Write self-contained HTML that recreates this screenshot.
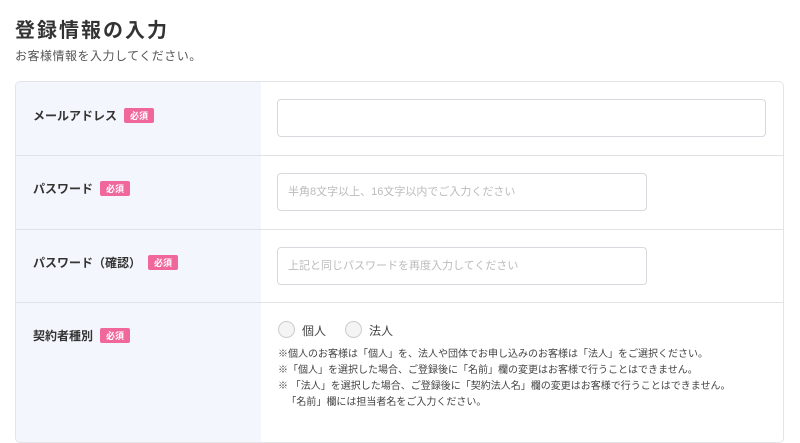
<html><head><style>
body{margin:0;width:800px;height:412px;overflow:hidden;background:#fff;font-family:"Liberation Sans","Noto Sans CJK JP",sans-serif;color:#333}
h1{position:absolute;left:15px;top:14px;margin:0;font-size:20px;font-weight:bold;letter-spacing:2px;color:#333}
.sub{position:absolute;left:15px;top:47px;font-size:12px;color:#555;letter-spacing:.5px}
.card{position:absolute;left:15px;top:81px;width:767px;height:360px;border:1px solid #e2e4e8;border-radius:5px;overflow:hidden}
.lab{position:absolute;left:0;top:0;width:245px;height:100%;background:#f3f7fd}
.row{position:absolute;left:0;width:767px;border-top:1px solid #e0e2e6}
.l{position:absolute;left:17px;font-size:12px;font-weight:bold;color:#333;letter-spacing:0}
.req{display:inline-block;background:#f0679b;color:#fff;font-size:9px;padding:1px 6px;border-radius:2px;margin-left:7px;vertical-align:1px;letter-spacing:0}
.in{position:absolute;left:261px;height:38px;border:1px solid #d6d9de;border-radius:4px;background:#fff;font-size:11px;color:#bbb;line-height:37px;padding-left:10px;box-sizing:border-box}
.rad{position:absolute;top:18px;font-size:12px;color:#444}
.rad i{display:inline-block;width:15px;height:15px;border:1px solid #ccc;border-radius:50%;background:#f4f4f4;vertical-align:-3px;margin-right:7px}
.note{position:absolute;left:262px;top:44px;font-size:10px;line-height:16px;color:#444}
</style></head><body>
<h1>登録情報の入力</h1>
<div class="sub">お客様情報を入力してください。</div>
<div class="card">
<div class="lab"></div>
<div class="l" style="top:25px">メールアドレス<span class="req">必須</span></div>
<div class="in" style="top:17px;width:489px"></div>
<div class="row" style="top:73px"></div>
<div class="l" style="top:98px">パスワード<span class="req">必須</span></div>
<div class="in" style="top:91px;width:370px">半角8文字以上、16文字以内でご入力ください</div>
<div class="row" style="top:147px"></div>
<div class="l" style="top:172px">パスワード（確認）<span class="req">必須</span></div>
<div class="in" style="top:165px;width:370px">上記と同じパスワードを再度入力してください</div>
<div class="row" style="top:220px"></div>
<div class="l" style="top:245px">契約者種別<span class="req">必須</span></div>
<div style="position:absolute;top:221px;left:0;width:767px">
<div class="rad" style="left:262px"><i></i>個人</div>
<div class="rad" style="left:329px"><i></i>法人</div>
<div class="note">※個人のお客様は「個人」を、法人や団体でお申し込みのお客様は「法人」をご選択ください。<br>※「個人」を選択した場合、ご登録後に「名前」欄の変更はお客様で行うことはできません。<br>※ 「法人」を選択した場合、ご登録後に「契約法人名」欄の変更はお客様で行うことはできません。<br>&nbsp;&nbsp;&nbsp;「名前」欄には担当者名をご入力ください。</div>
</div>
</div>
</body></html>
